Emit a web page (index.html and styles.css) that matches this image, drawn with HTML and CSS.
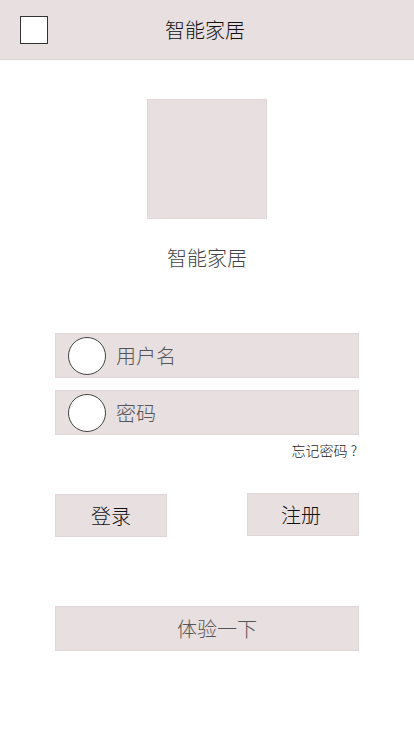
FILE: index.html
```html
<!DOCTYPE html>
<html lang="zh">
<head>
<meta charset="utf-8">
<title>智能家居</title>
<link rel="stylesheet" href="styles.css">
</head>
<body>
<header class="topbar">
  <div class="check"></div>
  <div class="title">智能家居</div>
  <div class="spacer"></div>
</header>
<main class="main">
  <div class="logo"></div>
  <div class="appname">智能家居</div>
  <div class="field field-first"><span class="circle"></span><span class="label">用户名</span></div>
  <div class="field field-second"><span class="circle"></span><span class="label">密码</span></div>
  <div class="forgot">忘记密码 ?</div>
  <div class="buttons">
    <div class="btn btn-login">登录</div>
    <div class="btn btn-register">注册</div>
  </div>
  <div class="try">体验一下</div>
</main>
</body>
</html>
```
FILE: styles.css
```css
html, body {
  margin: 0;
  padding: 0;
  background: #ffffff;
  font-family: "Noto Sans CJK SC", "Noto Sans", sans-serif;
  font-weight: 300;
}
.topbar {
  height: 59px;
  border-bottom: 1px solid #ddd6d7;
  background: #e8dfe0;
  display: grid;
  grid-template-columns: 1fr auto 1fr;
  align-items: center;
}
.check {
  width: 26px;
  height: 26px;
  border: 1px solid #333;
  background: #fff;
  margin-left: 20px;
}
.title {
  font-size: 20px;
  color: #111;
  line-height: 28px;
  margin-left: -4px;
}
.main {
  display: flex;
  flex-direction: column;
  align-items: center;
}
.logo {
  width: 118px;
  height: 118px;
  background: #e8dfe0;
  border: 1px solid #e0d6d7;
  margin-top: 39px;
}
.appname {
  margin-top: 25px;
  font-size: 20px;
  line-height: 28px;
  color: #444;
}
.field {
  width: 302px;
  height: 43px;
  background: #e8dfe0;
  border: 1px solid #e0d6d7;
  display: flex;
  align-items: center;
}
.field-first { margin-top: 61px; }
.field-second { margin-top: 12px; }
.circle {
  width: 36px;
  height: 36px;
  border-radius: 50%;
  border: 1px solid #444;
  background: #fff;
  margin-left: 12px;
}
.label {
  margin-left: 10px;
  font-size: 20px;
  color: #555;
  line-height: 28px;
}
.forgot {
  width: 304px;
  text-align: right;
  font-size: 14px;
  line-height: 19px;
  color: #222;
  margin-top: 6px;
  padding-right: 2px;
  box-sizing: border-box;
}
.buttons {
  width: 304px;
  display: flex;
  justify-content: space-between;
  align-items: flex-start;
  margin-top: 33px;
}
.btn {
  width: 110px;
  height: 41px;
  background: #e8dfe0;
  border: 1px solid #e0d6d7;
  display: flex;
  align-items: center;
  justify-content: center;
  font-size: 20px;
  color: #111;
}
.btn-login { margin-top: 1px; }
.btn-register { padding-right: 4px; width: 106px; }
.try {
  width: 282px;
  height: 43px;
  margin-top: 69px;
  background: #e8dfe0;
  border: 1px solid #e0d6d7;
  display: flex;
  align-items: center;
  justify-content: center;
  padding-left: 20px;
  font-size: 20px;
  color: #555;
}
```
